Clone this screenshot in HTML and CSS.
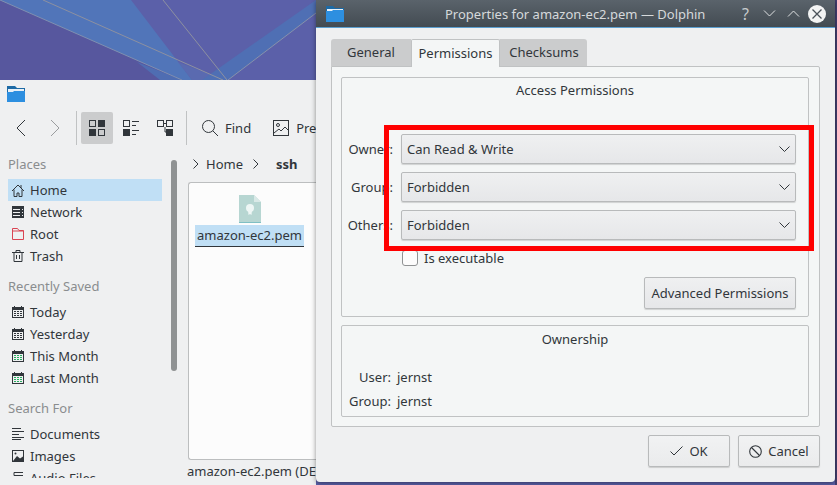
FILE: index.html
```html
<!DOCTYPE html>
<html lang="en">
<head>
    <title>Properties for amazon-ec2.pem</title>
    <meta charset="UTF-8" />
    <meta name="viewport" content="width=device-width" />
    <link rel="stylesheet" href="styles.css">
</head>
<body>
    <div class="desktop">
        <!-- wallpaper -->
        <svg class="wallpaper" width="837" height="485" viewBox="0 0 837 485">
            <rect width="837" height="485" fill="#5b60a9"/>
            <polygon points="0,0 182,80 0,80" fill="#57579e"/>
            <polygon points="0,0 131,0 192,80 182,80" fill="#5175b9"/>
            <polygon points="137,62 182,80 160,80" fill="#4f6db2"/>
            <polygon points="178,62 225,80 192,80" fill="#5a6ab0"/>
            <polygon points="202,80 316,0 316,13 228,80" fill="#4f6fb4"/>
            <line x1="0" y1="0" x2="182" y2="80" stroke="#7f8fb0" stroke-width="1"/>
            <line x1="43" y1="0" x2="223" y2="80" stroke="#8d91a0" stroke-width="1"/>
            <line x1="163" y1="0" x2="227" y2="80" stroke="#8d91a0" stroke-width="1"/>
            <line x1="228" y1="80" x2="316" y2="13" stroke="#8791ab" stroke-width="1"/>
            <rect x="835" width="2" height="485" fill="#433f70"/>
        </svg>

        <!-- file manager behind the dialog -->
        <div class="dolphin">
            <div class="dolphin-title">
                <svg width="20" height="18" viewBox="0 0 20 18">
                    <path d="M1 1h8l2 2h8v14H1z" fill="#1d6aa5"/>
                    <rect x="2" y="4" width="16" height="3" fill="#e8f1f8"/>
                    <path d="M1 7h6l1-1h11v11H1z" fill="#2d8fe0"/>
                </svg>
            </div>
            <div class="toolbar">
                <svg class="tool-icon nav" width="16" height="18" viewBox="0 0 16 18"><path d="M12 1 L4 9 L12 17" fill="none" stroke="#31363b" stroke-width="1"/></svg>
                <svg class="tool-icon nav" width="16" height="18" viewBox="0 0 16 18"><path d="M4 1 L12 9 L4 17" fill="none" stroke="#9a9c9e" stroke-width="1"/></svg>
                <span class="tool-sep"></span>
                <span class="tool-btn active">
                    <svg width="16" height="16" viewBox="0 0 16 16"><rect x=".5" y=".5" width="6" height="6" fill="none" stroke="#31363b"/><rect x="9" width="7" height="7" fill="#31363b"/><rect y="9" width="7" height="7" fill="#31363b"/><rect x="9.5" y="9.5" width="6" height="6" fill="none" stroke="#31363b"/></svg>
                </span>
                <span class="tool-btn">
                    <svg width="16" height="16" viewBox="0 0 16 16"><rect x=".5" y=".5" width="6" height="6" fill="none" stroke="#31363b"/><rect y="9" width="7" height="7" fill="#31363b"/><path d="M9 1.500h7M9 5.500h4M9 10.500h7M9 14.500h4" stroke="#31363b"/></svg>
                </span>
                <span class="tool-btn">
                    <svg width="16" height="16" viewBox="0 0 16 16"><rect x=".5" y=".5" width="6" height="6" fill="none" stroke="#31363b"/><rect x="9.5" y=".5" width="6" height="6" fill="none" stroke="#31363b"/><rect x="9" y="9" width="7" height="7" fill="#31363b"/><path d="M7 3.500h2M8 7v5h1" fill="none" stroke="#31363b"/></svg>
                </span>
                <span class="tool-sep second"></span>
                <span class="tool-label find">
                    <svg width="16" height="16" viewBox="0 0 16 16"><circle cx="6.500" cy="6.500" r="6" fill="none" stroke="#31363b"/><path d="M10.800 10.800 L16 16" stroke="#31363b"/></svg>
                    Find
                </span>
                <span class="tool-label">
                    <svg width="16" height="16" viewBox="0 0 16 16"><rect x=".5" y=".5" width="15" height="15" fill="none" stroke="#31363b"/><circle cx="5" cy="5" r="1.500" fill="none" stroke="#31363b"/><path d="M1 13 L6 9 L8 11 L12 7 L15 10" fill="none" stroke="#31363b"/></svg>
                    Preview
                </span>
            </div>
            <div class="dolphin-main">
                <aside class="sidebar">
                    <div class="places">
                        <h3>Places</h3>
                        <div class="place selected">
                            <svg width="12" height="13" viewBox="0 0 12 13"><path d="M0 7 L6 1 L12 7M2 5.500v7h3V9h2v3.500h3v-7M9 1v3" fill="none" stroke="#31363b"/></svg>
                            Home
                        </div>
                        <div class="place">
                            <svg width="12" height="12" viewBox="0 0 12 12"><rect width="12" height="12" fill="#31363b"/><path d="M1 3.500h7M1 6.500h7M1 9.500h7" stroke="#eff0f1"/><path d="M10 3.500h1M10 6.500h1M10 9.500h1" stroke="#eff0f1"/></svg>
                            Network
                        </div>
                        <div class="place">
                            <svg width="12" height="12" viewBox="0 0 12 12"><path d="M.5 .5h5l1.500 2h4.500v9h-11z M.5 3h11" fill="none" stroke="#da4453"/></svg>
                            Root
                        </div>
                        <div class="place">
                            <svg width="12" height="12" viewBox="0 0 12 12"><path d="M0 2.500h12M4 2.500V.5h4v2M2 2.500v9h8v-9M4.500 5v4M7.500 5v4" fill="none" stroke="#31363b"/></svg>
                            Trash
                        </div>
                        <h3>Recently Saved</h3>
                        <div class="place">
                            <svg width="12" height="12" viewBox="0 0 12 12"><use href="#cal"/></svg>
                            Today
                        </div>
                        <div class="place">
                            <svg width="12" height="12" viewBox="0 0 12 12"><use href="#cal"/></svg>
                            Yesterday
                        </div>
                        <div class="place">
                            <svg width="12" height="12" viewBox="0 0 12 12"><use href="#cal-green"/></svg>
                            This Month
                        </div>
                        <div class="place">
                            <svg width="12" height="12" viewBox="0 0 12 12"><use href="#cal-green"/></svg>
                            Last Month
                        </div>
                        <h3>Search For</h3>
                        <div class="place">
                            <svg width="12" height="12" viewBox="0 0 12 12"><path d="M0 .5h9M0 3.500h12M0 6.500h7M0 9.500h12M0 11.500h9" stroke="#31363b"/></svg>
                            Documents
                        </div>
                        <div class="place">
                            <svg width="12" height="12" viewBox="0 0 12 12"><rect x=".5" y=".5" width="11" height="11" fill="none" stroke="#31363b"/><circle cx="3.500" cy="3.500" r="1" fill="#31363b"/><path d="M1 11 L5 6 L8 8.500 L11 6.500 V11z" fill="#31363b"/></svg>
                            Images
                        </div>
                        <div class="place">
                            <svg width="12" height="12" viewBox="0 0 12 12"><path d="M2 .5h9M2 .5v3M2 3.500h9" fill="none" stroke="#31363b"/></svg>
                            Audio Files
                        </div>
                    </div>
                    <div class="scrollbar"><div class="scroll-thumb"></div></div>
                </aside>
                <section class="files">
                    <div class="breadcrumb">
                        <svg width="6" height="10" viewBox="0 0 6 10"><path d="M.5 .5 L5 5 L.5 9.500" fill="none" stroke="#31363b"/></svg>
                        <span>Home</span>
                        <svg width="6" height="10" viewBox="0 0 6 10"><path d="M.5 .5 L5 5 L.5 9.500" fill="none" stroke="#31363b"/></svg>
                        <b>ssh</b>
                    </div>
                    <div class="file-view">
                        <div class="file-item">
                            <svg width="22" height="28" viewBox="0 0 22 28">
                                <path d="M0 0h15l7 7v21H0z" fill="#b7d6d2"/>
                                <path d="M15 0l7 7h-7z" fill="#d9e9e7"/>
                                <rect y="27" width="22" height="1" fill="#7fbfc4"/>
                                <circle cx="11" cy="13" r="4" fill="#eef6f5"/>
                                <path d="M9 15h4l-.5 5-1.500-1-1.500 1z" fill="#eef6f5"/>
                            </svg>
                            <span class="file-name">amazon-ec2.pem</span>
                        </div>
                    </div>
                    <div class="status">amazon-ec2.pem (DER Encoded Certificate)</div>
                </section>
            </div>
        </div>

        <!-- properties dialog -->
        <div class="dialog">
            <div class="titlebar">
                <svg class="title-icon" width="20" height="16" viewBox="0 0 20 16">
                    <path d="M1 0h7l2 2h9v14H1z" fill="#1d6aa5"/>
                    <rect x="2" y="3" width="16" height="2" fill="#e8f1f8"/>
                    <path d="M1 5h6l1-1h11v12H1z" fill="#2d8fe0"/>
                </svg>
                <span class="title-text">Properties for amazon-ec2.pem — Dolphin</span>
                <span class="title-buttons">
                    <span class="title-btn help">?</span>
                    <span class="title-btn"><svg width="13" height="7" viewBox="0 0 13 7"><path d="M1 .5 L6.500 6 L12 .5" fill="none" stroke="#dfe1e2"/></svg></span>
                    <span class="title-btn"><svg width="13" height="7" viewBox="0 0 13 7"><path d="M1 6.500 L6.500 1 L12 6.500" fill="none" stroke="#dfe1e2"/></svg></span>
                    <span class="title-btn"><svg width="18" height="18" viewBox="0 0 18 18"><circle cx="9" cy="9" r="9" fill="#f3f4f4"/><path d="M4.500 4.500 L13.500 13.500 M13.500 4.500 L4.500 13.500" stroke="#4a5259" stroke-width="1.300"/></svg></span>
                </span>
            </div>
            <div class="dialog-body">
                <div class="tabs">
                    <span class="tab">General</span>
                    <span class="tab current">Permissions</span>
                    <span class="tab last">Checksums</span>
                </div>
                <div class="tab-pane">
                    <fieldset class="group access">
                        <div class="group-title">Access Permissions</div>
                        <div class="form-rows">
                            <div class="form-row">
                                <label>Owner:</label>
                                <div class="combo">Can Read &amp; Write
                                    <svg width="11" height="6" viewBox="0 0 11 6"><path d="M.5 .5 L5.500 5.500 L10.500 .5" fill="none" stroke="#31363b"/></svg>
                                </div>
                            </div>
                            <div class="form-row">
                                <label>Group:</label>
                                <div class="combo">Forbidden
                                    <svg width="11" height="6" viewBox="0 0 11 6"><path d="M.5 .5 L5.500 5.500 L10.500 .5" fill="none" stroke="#31363b"/></svg>
                                </div>
                            </div>
                            <div class="form-row">
                                <label>Others:</label>
                                <div class="combo">Forbidden
                                    <svg width="11" height="6" viewBox="0 0 11 6"><path d="M.5 .5 L5.500 5.500 L10.500 .5" fill="none" stroke="#31363b"/></svg>
                                </div>
                            </div>
                        </div>
                        <div class="check-row"><span class="checkbox"></span>Is executable</div>
                        <div class="advanced-row"><span class="button advanced">Advanced Permissions</span></div>
                    </fieldset>
                    <fieldset class="group ownership">
                        <div class="group-title">Ownership</div>
                        <div class="owner-row first"><label>User:</label><span>jernst</span></div>
                        <div class="owner-row"><label>Group:</label><span>jernst</span></div>
                    </fieldset>
                </div>
                <div class="dialog-buttons">
                    <span class="button action">
                        <svg width="13" height="10" viewBox="0 0 13 10"><path d="M.5 5.500 L4 9 L12.500 .5" fill="none" stroke="#31363b"/></svg>
                        OK
                    </span>
                    <span class="button action">
                        <svg width="13" height="13" viewBox="0 0 13 13"><circle cx="6.500" cy="6.500" r="5.800" fill="none" stroke="#31363b" stroke-width="1.100"/><path d="M2.500 2.500 L10.500 10.500" stroke="#31363b" stroke-width="1.100"/></svg>
                        Cancel
                    </span>
                </div>
            </div>
        </div>

        <!-- red annotation drawn over the screenshot -->
        <div class="annotation"></div>

        <svg width="0" height="0" class="defs">
            <defs>
                <g id="cal">
                    <rect x=".5" y="1.500" width="11" height="10" fill="none" stroke="#31363b"/>
                    <rect y="1" width="12" height="3" fill="#31363b"/>
                    <rect x="2" width="1" height="2" fill="#31363b"/><rect x="9" width="1" height="2" fill="#31363b"/>
                    <path d="M2 5.500h8M2 7.500h8M2 9.500h8" stroke="#31363b" stroke-dasharray="2 1"/>
                </g>
                <g id="cal-green">
                    <rect x=".5" y="1.500" width="11" height="10" fill="none" stroke="#31363b"/>
                    <rect y="1" width="12" height="3" fill="#31363b"/>
                    <rect x="2" width="1" height="2" fill="#31363b"/><rect x="9" width="1" height="2" fill="#31363b"/>
                    <path d="M2 5.500h8M2 7.500h8M2 9.500h8" stroke="#27ae60" stroke-dasharray="2 1"/>
                </g>
            </defs>
        </svg>
    </div>
</body>
</html>
```

FILE: styles.css
```css
body {
    margin: 0;
    font-family: "Noto Sans", sans-serif;
    font-size: 13px;
    color: #31363b;
    overflow: hidden;
}
svg {
    flex: none;
    display: block;
}
.desktop {
    position: relative;
    width: 837px;
    height: 485px;
    overflow: hidden;
}
.wallpaper {
    position: absolute;
    left: 0;
    top: 0;
}
.defs {
    position: absolute;
}

/* file manager */
.dolphin {
    position: absolute;
    left: 0;
    top: 80px;
    width: 316px;
    height: 405px;
    background: #eff0f1;
    overflow: hidden;
}
.dolphin-title {
    height: 31px;
    padding: 5px 0 0 6px;
    box-sizing: border-box;
}
.toolbar {
    display: flex;
    align-items: center;
    height: 34px;
    white-space: nowrap;
}
.tool-icon.nav {
    margin-left: 13px;
    margin-right: 5px;
}
.tool-sep {
    flex: none;
    width: 1px;
    height: 34px;
    background: #c0c2c3;
    margin: 0 4px 0 8px;
}
.tool-sep.second {
    margin: 0 15px 0 3px;
}
.tool-btn {
    flex: none;
    width: 32px;
    height: 32px;
    margin-right: 2px;
    display: flex;
    align-items: center;
    justify-content: center;
    border-radius: 2px;
}
.tool-btn.active {
    background: #cbcccd;
}
.tool-label {
    flex: none;
    display: flex;
    align-items: center;
    gap: 7px;
}
.tool-label.find {
    margin-right: 22px;
}
.dolphin-main {
    display: flex;
    margin-top: 8px;
}
.sidebar {
    width: 188px;
    flex: none;
    display: flex;
    height: 325px;
    overflow: hidden;
}
.places {
    width: 154px;
    margin-left: 8px;
    flex: none;
}
.places h3 {
    margin: 8px 0 4px 0;
    font-size: 13px;
    font-weight: normal;
    color: #8a8d8f;
    height: 22px;
    line-height: 22px;
}
.places h3:first-child {
    margin-top: 0;
}
.place {
    height: 22px;
    display: flex;
    align-items: center;
    gap: 6px;
    padding-left: 4px;
}
.place.selected {
    background: #c0dff5;
}
.scrollbar {
    margin-left: 9px;
    padding-top: 7px;
}
.scroll-thumb {
    width: 6px;
    height: 211px;
    background: #8f9293;
    border-radius: 3px;
}
.files {
    width: 128px;
    flex: none;
}
.breadcrumb {
    display: flex;
    align-items: center;
    height: 22px;
    white-space: nowrap;
    padding-left: 5px;
}
.breadcrumb span {
    margin: 0 10px 0 7px;
}
.breadcrumb b {
    margin-left: 17px;
}
.file-view {
    margin-top: 7px;
    height: 278px;
    background: #fcfcfc;
    border: 1px solid #bcbebf;
    border-right: 0;
    border-radius: 3px 0 0 3px;
    box-sizing: border-box;
    padding-top: 12px;
}
.file-item {
    width: 109px;
    margin-left: 6px;
    display: flex;
    flex-direction: column;
    align-items: center;
    gap: 2px;
}
.file-name {
    width: 109px;
    height: 22px;
    line-height: 21px;
    text-align: center;
    background: #c0dff5;
    border-bottom: 1px solid #31363b;
    box-sizing: border-box;
}
.status {
    margin-top: 1px;
    white-space: nowrap;
    height: 20px;
    line-height: 20px;
    margin-left: -1px;
}

/* properties dialog */
.dialog {
    position: absolute;
    left: 316px;
    top: 0;
    width: 519px;
    height: 482px;
    background: #eff0f1;
    border-radius: 0 0 4px 4px;
    box-shadow: 0 1px 5px rgba(0, 0, 0, 0.45);
}
.titlebar {
    height: 27px;
    display: flex;
    align-items: center;
    background: linear-gradient(#5a636b, #434b52);
    border-bottom: 1px solid #5c9fd0;
    color: #d6d9db;
    padding-left: 9px;
}
.title-text {
    margin-left: 100px;
}
.title-buttons {
    display: flex;
    align-items: center;
    margin-left: 28px;
}
.title-btn {
    width: 24px;
    display: flex;
    justify-content: center;
}
.help {
    font-size: 16px;
    color: #c8cbcd;
}
.dialog-body {
    padding: 11px 15px 0 15px;
}
.tabs {
    display: flex;
    height: 27px;
}
.tab {
    height: 27px;
    line-height: 26px;
    width: 80px;
    text-align: center;
    background: #cbcccd;
    box-sizing: border-box;
    border-radius: 3px 0 0 0;
}
.tab.current {
    width: 89px;
    background: #f4f6f6;
    border: 1px solid #c0c2c3;
    border-bottom: 0;
    border-radius: 2px 2px 0 0;
    position: relative;
    z-index: 1;
    height: 28px;
}
.tab.last {
    width: 87px;
    padding-left: 1px;
    border-radius: 0 3px 0 0;
}
.tab-pane {
    width: 489px;
    height: 361px;
    background: #f4f6f6;
    border: 1px solid #c0c2c3;
    border-radius: 0 2px 2px 2px;
    box-sizing: border-box;
    padding: 10px 10px 0 9px;
    display: flex;
    flex-direction: column;
    gap: 8px;
}
.group {
    margin: 0;
    padding: 0;
    min-width: 0;
    border: 1px solid #c0c2c3;
    border-radius: 2px;
    box-sizing: border-box;
    flex: none;
}
.group.access {
    height: 240px;
}
.group.ownership {
    height: 92px;
}
.group-title {
    text-align: center;
    height: 24px;
    line-height: 24px;
}
.ownership .group-title {
    height: 26px;
    line-height: 26px;
}
.form-rows {
    margin-top: 32px;
    display: flex;
    flex-direction: column;
    gap: 8px;
}
.form-row {
    display: flex;
    align-items: center;
}
.form-row label {
    width: 51px;
    text-align: right;
    flex: none;
    margin-right: 8px;
}
.combo {
    width: 395px;
    height: 30px;
    box-sizing: border-box;
    border: 1px solid #b8babb;
    border-radius: 2px;
    background: linear-gradient(#eff0f1, #e6e7e9);
    box-shadow: 0 1px 1px rgba(0, 0, 0, 0.15);
    display: flex;
    align-items: center;
    justify-content: space-between;
    padding: 0 5px 0 5px;
}
.check-row {
    display: flex;
    align-items: center;
    margin: 9px 0 0 60px;
    height: 18px;
}
.checkbox {
    width: 16px;
    height: 16px;
    box-sizing: border-box;
    border: 1px solid #8f9293;
    border-radius: 3px;
    background: #fcfcfc;
    margin-right: 6px;
}
.advanced-row {
    display: flex;
    justify-content: flex-end;
    padding-right: 12px;
    margin-top: 10px;
}
.button {
    display: flex;
    align-items: center;
    justify-content: center;
    box-sizing: border-box;
    border: 1px solid #b8babb;
    border-radius: 2px;
    background: linear-gradient(#eff0f1, #e6e7e9);
    box-shadow: 0 1px 1px rgba(0, 0, 0, 0.15);
}
.button.advanced {
    width: 152px;
    height: 32px;
}
.owner-row {
    display: flex;
    height: 24px;
    line-height: 24px;
}
.owner-row.first {
    margin-top: 13px;
}
.owner-row label {
    width: 49px;
    text-align: right;
    margin-right: 6px;
}
.dialog-buttons {
    display: flex;
    justify-content: flex-end;
    gap: 8px;
    margin-top: 8px;
    width: 489px;
}
.button.action {
    width: 82px;
    height: 32px;
    gap: 6px;
    background: linear-gradient(#f1f2f3, #eaebec);
}

/* annotation */
.annotation {
    position: absolute;
    left: 384px;
    top: 125px;
    width: 420px;
    height: 116px;
    border: 5px solid #ff0000;
}
```
